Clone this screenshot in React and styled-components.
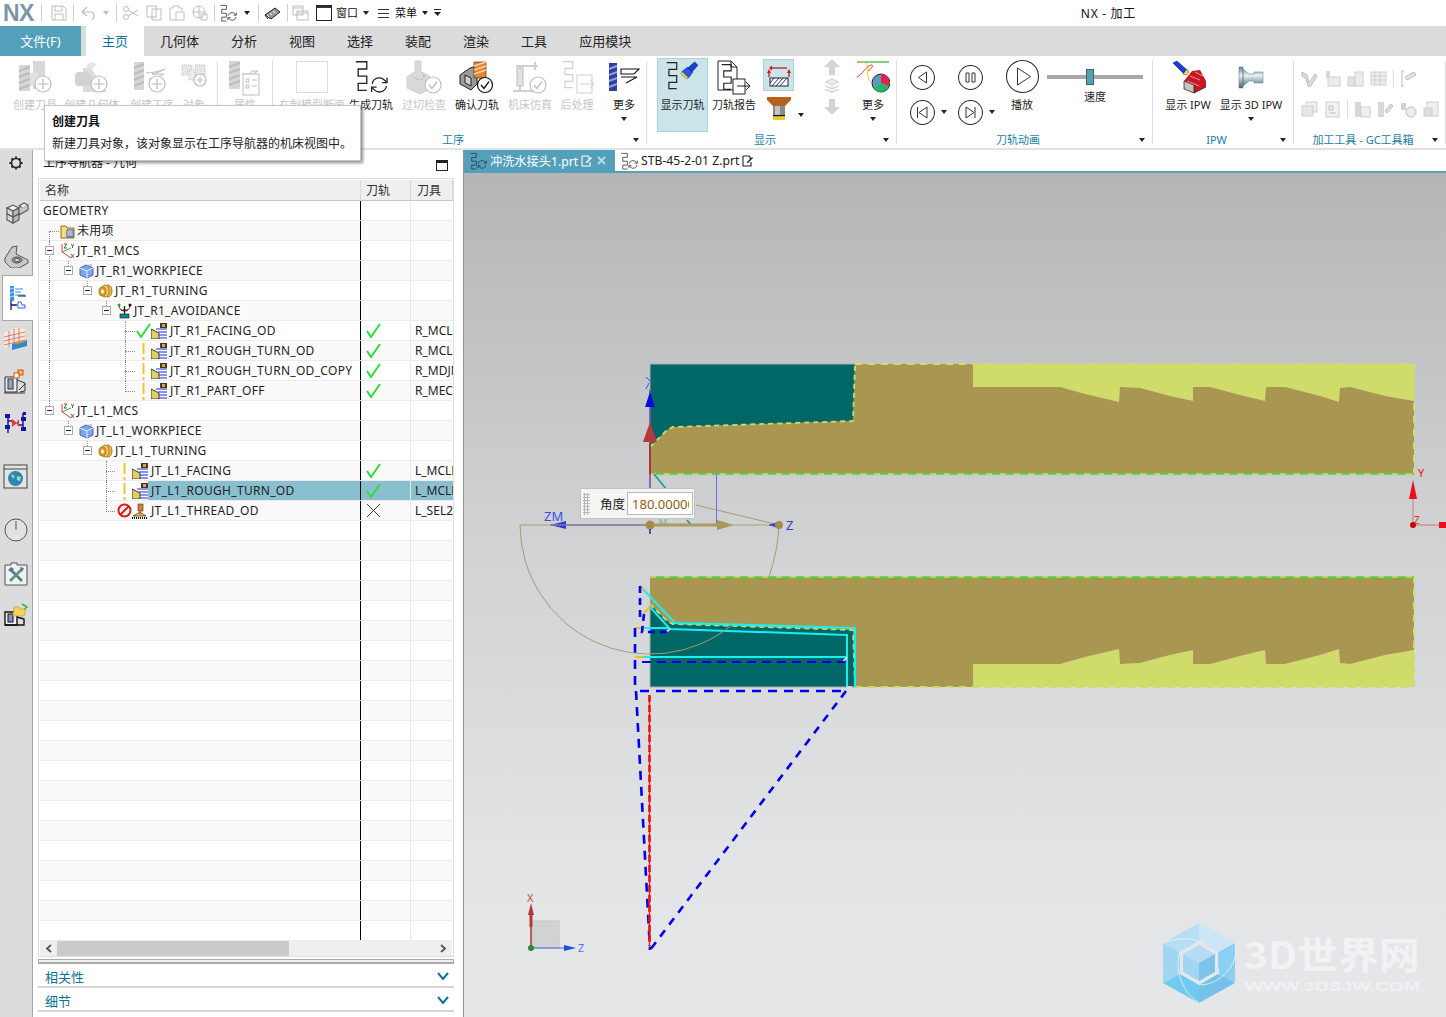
import React from 'react';
import styled, { createGlobalStyle } from 'styled-components';

const Global = createGlobalStyle`
  html, body { margin: 0; padding: 0; height: 100%; overflow: hidden; background: #fff; }
  body { font-family: "Noto Sans", "Noto Sans CJK SC", sans-serif; font-size: 12px; color: #222; }
  svg { display: block; flex: none; }
`;

const Page = styled.div`
  position: relative;
  width: 1446px;
  height: 1017px;
  display: flex;
  flex-direction: column;
  overflow: hidden;
`;

/* ---------- title bar ---------- */
const TitleBar = styled.div`
  height: 26px;
  display: flex;
  align-items: center;
  flex: none;
`;
const Logo = styled.div`
  width: 36px;
  padding-left: 3px;
  box-sizing: border-box;
  font: bold 23px/26px "Liberation Sans", sans-serif;
  color: #7d95a8;
  letter-spacing: -0.5px;
`;
const BarSep = styled.span`
  width: 1px;
  height: 18px;
  background: #cfcfcf;
  margin: 0 ${p => p.$r ?? 0}px 0 ${p => p.$l ?? 0}px;
  flex: none;
`;
const BarSlot = styled.span`
  width: ${p => p.$w}px;
  display: flex;
  justify-content: center;
  flex: none;
`;
const BarText = styled.span`
  font-size: 11px;
  line-height: 26px;
  color: #111;
  white-space: nowrap;
  flex: none;
  margin-left: ${p => p.$ml ?? 0}px;
`;
const AppTitle = styled.div`
  margin-left: auto;
  margin-right: 310px;
  font-size: 12px;
  letter-spacing: .7px;
  color: #111;
  white-space: nowrap;
`;
const Caret = styled.i`
  display: block;
  flex: none;
  width: 0;
  height: 0;
  border-left: 3.5px solid transparent;
  border-right: 3.5px solid transparent;
  border-top: 4px solid ${p => p.$c || '#222'};
  margin-left: ${p => p.$ml ?? 0}px;
`;

/* ---------- tabs ---------- */
const TabBar = styled.div`
  height: 30px;
  display: flex;
  background: #dbdbdb;
  flex: none;
`;
const FileTab = styled.div`
  width: 81px;
  margin-right: 5px;
  background: #54a0bb;
  color: #fff;
  font-size: 13px;
  line-height: 30px;
  text-align: center;
`;
const Tab = styled.div`
  padding: 0 16px;
  font-size: 13px;
  line-height: 30px;
  white-space: nowrap;
  color: ${p => (p.$active ? '#0f7394' : '#222')};
  background: ${p => (p.$active ? '#fff' : 'transparent')};
`;

/* ---------- ribbon ---------- */
const Ribbon = styled.div`
  height: 94px;
  display: flex;
  flex: none;
  border-bottom: 2px solid #e2e2e2;
  box-sizing: border-box;
`;
const Group = styled.section`
  width: ${p => p.$w}px;
  flex: none;
  display: flex;
  flex-direction: column;
  box-sizing: border-box;
  position: relative;
  &::after {
    content: "";
    position: absolute;
    right: 0;
    top: 5px;
    bottom: 4px;
    width: 1px;
    background: #dcdcdc;
  }
`;
const GroupBody = styled.div`
  height: 76px;
  display: flex;
  padding: 2px 0 0 ${p => p.$pl ?? 0}px;
  box-sizing: border-box;
  flex: none;
`;
const GroupFoot = styled.div`
  height: 16px;
  display: flex;
  align-items: center;
  padding: 0 8px 0 0;
`;
const GroupName = styled.span`
  flex: 1;
  text-align: center;
  font-size: 11px;
  line-height: 16px;
  color: #1b7ea3;
  white-space: nowrap;
`;
const Tool = styled.div`
  width: ${p => p.$w}px;
  height: 74px;
  margin-left: ${p => p.$ml ?? 0}px;
  flex: none;
  display: flex;
  flex-direction: column;
  align-items: center;
  box-sizing: border-box;
  background: ${p => (p.$on ? '#cbe4ea' : 'transparent')};
  box-shadow: ${p => (p.$on ? 'inset 0 0 0 1px #abd3dd' : 'none')};
`;
const ToolIcon = styled.div`
  height: 38px;
  padding-top: 2px;
  box-sizing: border-box;
  display: flex;
  justify-content: center;
`;
const ToolLabel = styled.div`
  font-size: 11px;
  line-height: 15px;
  white-space: nowrap;
  margin-top: 1px;
  color: ${p => (p.$off ? '#c6c6c6' : '#222')};
`;
const ToolCaret = styled(Caret)`
  margin-top: 5px;
`;
const StackCol = styled.div`
  width: ${p => p.$w}px;
  margin-left: ${p => p.$ml ?? 0}px;
  flex: none;
  display: flex;
  flex-direction: column;
  align-items: center;
  gap: ${p => p.$gap ?? 4}px;
`;
const SelectedTile = styled.div`
  width: 31px;
  height: 32px;
  margin-top: 1px;
  background: #cbe4ea;
  box-shadow: inset 0 0 0 1px #abd3dd;
  display: flex;
  align-items: center;
  justify-content: center;
`;
const CaretSlot = styled.div`
  width: ${p => p.$w}px;
  height: 62px;
  flex: none;
  display: flex;
  align-items: flex-end;
  justify-content: center;
  padding-bottom: 3px;
  box-sizing: border-box;
`;
const Transport = styled.div`
  display: grid;
  grid-template-columns: 24px 12px;
  grid-auto-rows: 24px;
  row-gap: 11px;
  column-gap: 4px;
  align-items: center;
  margin-left: ${p => p.$ml ?? 0}px;
  margin-top: 7px;
  flex: none;
  justify-items: center;
`;
const SpeedBox = styled.div`
  width: 96px;
  margin-left: 5px;
  flex: none;
  display: flex;
  flex-direction: column;
  align-items: center;
`;
const Track = styled.div`
  width: 96px;
  height: 4px;
  margin-top: 17px;
  background: #a9a9a9;
  position: relative;
`;
const Thumb = styled.div`
  position: absolute;
  left: 39px;
  top: -6px;
  width: 6px;
  height: 14px;
  background: #54a0bb;
  border: 1px solid #4d5a60;
`;
const SpeedLabel = styled.div`
  font-size: 11px;
  line-height: 14px;
  margin-top: 11px;
  color: #222;
`;
const MiniRows = styled.div`
  height: 76px;
  box-sizing: border-box;
  padding: 13px 0 0 7px;
  display: flex;
  flex-direction: column;
  gap: 13px;
  flex: none;
`;
const MiniRow = styled.div`
  display: flex;
  align-items: center;
  gap: 6px;
`;
const MiniSep = styled.span`
  width: 1px;
  height: 18px;
  background: #dcdcdc;
`;

/* ---------- tooltip ---------- */
const Tip = styled.div`
  position: absolute;
  left: 44px;
  top: 105px;
  width: 317px;
  height: 56px;
  box-sizing: border-box;
  padding: 8px 0 0 7px;
  background: #fff;
  border: 1px solid #c4c4c4;
  box-shadow: 2px 2px 3px rgba(0, 0, 0, 0.45);
  z-index: 5;
`;
const TipTitle = styled.div`
  font-size: 12px;
  line-height: 15px;
  font-weight: 700;
  color: #111;
`;
const TipBody = styled.div`
  font-size: 12px;
  line-height: 15px;
  margin-top: 7px;
  color: #222;
  white-space: nowrap;
`;

/* ---------- body ---------- */
const Body = styled.div`
  flex: 1;
  display: flex;
  min-height: 0;
`;
const Rail = styled.nav`
  width: 33px;
  flex: none;
  background: #dcdcdc;
  border-right: 1px solid #a6a6a6;
  box-sizing: border-box;
  padding-top: 1px;
  display: flex;
  flex-direction: column;
`;
const RailItem = styled.div`
  height: ${p => p.$h ?? 42}px;
  margin-top: ${p => p.$mt ?? 0}px;
  margin-left: 2px;
  margin-right: ${p => (p.$on ? -1 : 0)}px;
  flex: none;
  display: flex;
  align-items: center;
  justify-content: center;
  padding-right: 2px;
  box-sizing: border-box;
  ${p => p.$on && 'background:#fff;border:1px solid #a6a6a6;border-right:none;position:relative;'}
`;
const Panel = styled.aside`
  width: 431px;
  flex: none;
  box-sizing: border-box;
  border-right: 1px solid #919191;
  padding: 0 9px 0 5px;
  display: flex;
  flex-direction: column;
`;
const PanelHead = styled.div`
  height: 28px;
  display: flex;
  align-items: flex-end;
  justify-content: space-between;
  padding: 0 6px 7px 5px;
  box-sizing: border-box;
  flex: none;
  font-size: 12px;
  line-height: 16px;
`;
const TreeBox = styled.div`
  height: 779px;
  border: 1px solid #dedede;
  box-sizing: border-box;
  padding: 1px 1px 0 1px;
  flex: none;
`;
const HeadRow = styled.div`
  display: grid;
  grid-template-columns: 321px 50px 42px;
  height: 21px;
  background: #efefef;
  border-bottom: 1px solid #c8c8c8;
  box-sizing: border-box;
`;
const HeadCell = styled.div`
  padding-left: ${p => p.$pl ?? 5}px;
  font-size: 12px;
  line-height: 21px;
  border-right: 1px solid #d8d8d8;
  color: #333;
`;
const Row = styled.div`
  display: grid;
  grid-template-columns: 321px 50px 42px;
  height: 20px;
  box-sizing: border-box;
  border-bottom: 1px solid #ececec;
  background: ${p => (p.$alt ? '#fafafa' : '#fff')};
`;
const NameCell = styled.div`
  position: relative;
  display: flex;
  align-items: center;
  border-right: 1px solid #000;
  padding-left: ${p => p.$pl}px;
  white-space: nowrap;
`;
const GuideV = styled.i`
  position: absolute;
  left: ${p => p.$x}px;
  top: ${p => (p.$part === 'bottom' ? 10 : 0)}px;
  bottom: ${p => (p.$part === 'top' ? 10 : -1)}px;
  border-left: 1px dotted #8a8a8a;
`;
const GuideH = styled.i`
  position: absolute;
  left: ${p => p.$x}px;
  width: ${p => p.$w}px;
  top: 10px;
  border-top: 1px dotted #8a8a8a;
`;
const Toggle = styled.span`
  width: 9px;
  height: 9px;
  flex: none;
  margin-right: 6px;
  box-sizing: border-box;
  position: relative;
  z-index: 1;
  ${p => !p.$hide && `
    border: 1px solid #a9a9a9;
    background: #fff;
    &::after {
      content: "";
      position: absolute;
      left: 1px;
      right: 1px;
      top: 3px;
      height: 1px;
      background: #222;
    }
  `}
`;
const StateSlot = styled.span`
  width: 15px;
  flex: none;
  display: flex;
  justify-content: ${p => (p.$mid ? 'center' : 'flex-start')};
`;
const RowIcon = styled.span`
  width: 16px;
  flex: none;
  margin-right: ${p => p.$mr ?? 1}px;
  display: flex;
  justify-content: center;
`;
const RowName = styled.span`
  flex: ${p => (p.$sel ? 1 : 'none')};
  align-self: stretch;
  line-height: 19px;
  padding-left: 3px;
  margin-left: -3px;
  background: ${p => (p.$sel ? '#8abfcf' : 'transparent')};
  font-size: 12px;
  letter-spacing: .3px;
  color: #222;
`;
const Cell = styled.div`
  overflow: hidden;
  white-space: nowrap;
  border-right: ${p => (p.$last ? 'none' : '1px solid #e8e8e8')};
  padding-left: ${p => p.$pl ?? 4}px;
  line-height: 19px;
  font-size: 12px;
  color: #222;
  background: ${p => (p.$sel ? '#8abfcf' : 'transparent')};
  display: flex;
  align-items: center;
`;
const CellText = styled.span`
  line-height: 19px;
`;
const ScrollBar = styled.div`
  height: 15px;
  display: flex;
  align-items: center;
  justify-content: flex-start;
  background: #efefef;
`;
const ScrollArrow = styled.span`
  width: 17px;
  flex: none;
  display: flex;
  justify-content: center;
  margin-left: ${p => (p.$end ? 'auto' : 0)};
`;
const ScrollThumb = styled.span`
  width: 232px;
  height: 15px;
  background: #cacaca;
`;
const Grip = styled.div`
  height: 5px;
  margin-top: 2px;
  background: #efefef;
  border: 1px solid #aaa;
  border-bottom-width: 2px;
  box-sizing: border-box;
  flex: none;
`;
const Section = styled.div`
  height: 24px;
  flex: none;
  box-sizing: border-box;
  border-bottom: 2px solid #d4d4d4;
  display: flex;
  align-items: center;
  justify-content: space-between;
  padding: 3px 5px 0 7px;
  font-size: 13px;
  color: #0f7394;
`;

/* ---------- graphics area ---------- */
const Stage = styled.main`
  flex: 1;
  min-width: 0;
  display: flex;
  flex-direction: column;
  position: relative;
`;
const DocBar = styled.div`
  height: 23px;
  flex: none;
  display: flex;
  border-bottom: 2px solid #54a0bb;
  box-sizing: border-box;
`;
const DocTab = styled.div`
  width: ${p => p.$w}px;
  display: flex;
  align-items: center;
  gap: 3px;
  padding-left: 5px;
  box-sizing: border-box;
  background: ${p => (p.$on ? '#54a0bb' : '#fff')};
  color: ${p => (p.$on ? '#fff' : '#222')};
  font-size: 12.2px;
  white-space: nowrap;
`;
const Canvas = styled.div`
  flex: 1;
  position: relative;
  background: linear-gradient(180deg, #b4b5b7 0%, #cfd0d2 40%, #e2e3e5 80%, #e6e7e9 100%);
`;
const AngleBox = styled.div`
  position: absolute;
  left: 116px;
  top: 315px;
  width: 115px;
  height: 31px;
  box-sizing: border-box;
  display: flex;
  align-items: center;
  background: #f5f5f5;
  border: 1px solid #c2c2c2;
`;
const Dots = styled.span`
  width: 7px;
  height: 22px;
  margin-left: 2px;
  flex: none;
  background-image: radial-gradient(#b5b5b5 1px, transparent 1.2px);
  background-size: 3px 3px;
`;
const AngleLabel = styled.span`
  margin-left: 10px;
  font-size: 12.5px;
  color: #222;
  white-space: nowrap;
`;
const AngleInput = styled.input`
  width: 66px;
  height: 23px;
  margin-left: 2px;
  padding: 0 3px 0 4px;
  box-sizing: border-box;
  border: 1px solid #b9b9b9;
  background: #fff;
  color: #8d5a16;
  font: 13px "Noto Sans", sans-serif;
  outline: none;
`;

/* ---------- small drawings ---------- */
const G = '#cfcfcf';
const D = '#bdbdbd';

const Glyph = ({ w = 36, h = 36, vb, children }) => (
  <svg width={w} height={h} viewBox={vb || `0 0 ${w} ${h}`} fill="none">{children}</svg>
);

const Cutter = ({ x, y, w = 11, h = 26 }) => (
  <g>
    <rect x={x} y={y} width={w} height={h} fill="#d6d6d6" />
    <path d={`M${x} ${y + 6}l${w} -4M${x} ${y + 12}l${w} -4M${x} ${y + 18}l${w} -4M${x} ${y + 24}l${w} -4`} stroke="#bcbcbc" strokeWidth="2" />
  </g>
);
const PlusDisc = ({ cx, cy, r = 8 }) => (
  <g>
    <circle cx={cx} cy={cy} r={r} fill="#fff" stroke={D} strokeWidth="1.2" />
    <path d={`M${cx - r + 2.5} ${cy}H${cx + r - 2.5}M${cx} ${cy - r + 2.5}V${cy + r - 2.5}`} stroke={D} strokeWidth="1.2" />
  </g>
);
const CheckDisc = ({ cx, cy, r = 8, c = D }) => (
  <g>
    <circle cx={cx} cy={cy} r={r} fill="#fff" stroke={c} strokeWidth="1.2" />
    <path d={`M${cx - 4} ${cy}l3 3.5 5 -7`} stroke={c} strokeWidth="1.3" />
  </g>
);
const SPath = ({ x = 0, y = 0, c = '#222', s = 1 }) => (
  <path transform={`translate(${x} ${y}) scale(${s})`} d="M.7.7h10v6.6H2.9v6.4h7.8v6.6H2.9v6.4h7.8" stroke={c} strokeWidth="1.2" />
);
const Refresh = ({ x = 0, y = 0, c = '#222', s = 1 }) => (
  <g transform={`translate(${x} ${y}) scale(${s})`} stroke={c} strokeWidth="1.2">
    <path d="M2 8a6.5 6.5 0 0 1 11-3.5l2 2" />
    <path d="M15.5 2.5v4.5H11" />
    <path d="M15 10a6.5 6.5 0 0 1-11 3.5l-2-2" />
    <path d="M1.500 15.500v-4.500H6" />
  </g>
);
const Flashlight = ({ x, y, s = 1 }) => (
  <g transform={`translate(${x} ${y}) scale(${s})`}>
    <path d="M7 7L14 1l3 3-6 7z" fill="#1b3fd6" stroke="#0b1f80" strokeWidth=".6" />
    <path d="M2 10l5-4 5 5-4 5z" fill="#2c55e8" stroke="#0b1f80" strokeWidth=".6" />
    <path d="M2 10l6 6-2 1-5-5z" fill="#f4e04a" stroke="#444" strokeWidth=".5" />
  </g>
);

const CreateToolIcon = () => (
  <Glyph><Cutter x={2} y={5} /><rect x={16} y={1} width={12} height={28} fill="#d8d8d8" /><rect x={13} y={13} width={8} height={13} fill="#e2e2e2" /><PlusDisc cx={26} cy={24} /></Glyph>
);
const CreateGeomIcon = () => (
  <Glyph w={40}><path d="M11 8h8l16 24H11z" fill="#dcdcdc" /><path d="M13 6l7-4 5 2-5 6z" fill="#e6e6e6" /><rect x={3} y={12} width={16} height={14} rx={4} fill="#d2d2d2" /><PlusDisc cx={27} cy={24} /></Glyph>
);
const CreateOpIcon = () => (
  <Glyph w={40}><Cutter x={2} y={2} w={10} h={28} /><path d="M14 13c8 0 16-3 19-4-5 3-9 4-13 5h12c-5 3-10 4-15 5" stroke={D} /><PlusDisc cx={25} cy={24} /></Glyph>
);
const SmallCreateIcon = () => (
  <Glyph w={26}><rect x={1} y={5} width={10} height={10} fill="#e6e6e6" stroke={D} strokeDasharray="1 1" /><rect x={8} y={10} width={10} height={10} fill="#ececec" stroke={D} strokeDasharray="1 1" /><rect x={14} y={5} width={10} height={10} fill="#e6e6e6" stroke={D} strokeDasharray="1 1" /><PlusDisc cx={19} cy={20} r={6} /></Glyph>
);
const PropsIcon = () => (
  <Glyph w={34}><Cutter x={1} y={1} w={11} h={28} /><path d="M14 14h8l2-3h6l-8 5" stroke={D} /><rect x={15} y={14} width={16} height={21} fill="#fff" stroke={D} /><path d="M18 19h3v3h-3zM24 20h5M18 25h3v3h-3zM24 26h5" stroke={D} /></Glyph>
);
const EmptyIcon = () => (
  <Glyph w={34}><rect x={1.500} y={1.500} width={31} height={31} stroke="#dcdcdc" fill="#fff" /></Glyph>
);
const GenerateIcon = () => (
  <Glyph w={36}><SPath x={2} y={1} s={1.1} /><Refresh x={17} y={15} s={1.1} /></Glyph>
);
const BlockCheckIcon = () => (
  <Glyph><path d="M1 17l6-4 2-1V1h6v11l3 1 8 5v10l-12 6L1 28z" fill="#d9d9d9" stroke="#cfcfcf" /><path d="M6 16l8 4 6-4-3-2v6h-6z" fill="#bdbdbd" /><CheckDisc cx={27} cy={25} /></Glyph>
);
const ConfirmIcon = () => (
  <Glyph>
    <path d="M1 15l10-7 7-2v18l-6 6-11-6z" fill="#9b9b9b" stroke="#222" />
    <path d="M6 15l6 3v8l-6-3z" fill="#cfcfcf" stroke="#222" />
    <path d="M15 2h12v16H15z" fill="#e9852c" stroke="#222" strokeWidth=".6" />
    <path d="M15 6l12-4M15 10l12-4M15 14l12-4" stroke="#f6d5a8" strokeWidth="1.4" />
    <CheckDisc cx={26} cy={25} r={7.500} c="#111" />
  </Glyph>
);
const SimIcon = () => (
  <Glyph><path d="M1 31h22M8 31V5M4 6h22M23 2v8" stroke={G} strokeWidth="2" /><rect x={5} y={8} width={6} height={18} fill="#e2e2e2" stroke={D} /><CheckDisc cx={26} cy={25} /></Glyph>
);
const PostIcon = () => (
  <Glyph w={34}><SPath x={2} y={1} c={G} /><rect x={17} y={15} width={15} height={18} stroke={G} fill="#fff" /><path d="M20 24h14M30 20l4 4-4 4" stroke={G} /></Glyph>
);
const MoreToolIcon = () => (
  <Glyph w={32}><rect x={1} y={3} width={8} height={28} fill="#2f3f9f" /><path d="M1 9l8-3M1 15l8-3M1 21l8-3M1 27l8-3" stroke="#8aa0ea" strokeWidth="2" /><path d="M13 9h18l-5 5H13zM13 17h16l-11 6" stroke="#111" strokeWidth="1.1" /></Glyph>
);
const ShowPathIcon = () => (
  <Glyph w={34} vb="0 0 34 36"><SPath x={0} y={2} /><Flashlight x={14} y={1} s={1.05} /></Glyph>
);
const ReportIcon = () => (
  <Glyph w={34}><path d="M1 1h13l6 6v23H1z" fill="#fff" stroke="#222" /><path d="M14 1v6h6" stroke="#222" /><SPath x={4} y={4} s={.95} /><rect x={16} y={19} width={12} height={15} fill="#fff" stroke="#222" /><path d="M20 26h12M29 22l4 4-4 4" stroke="#222" /></Glyph>
);
const HatchIcon = () => (
  <Glyph w={24} h={24}>
    <path d="M5 5h15" stroke="#c81818" strokeWidth="1.3" /><path d="M5 2.500L2 5l3 2.500z" fill="#c81818" />
    <path d="M2 9v5M22 9v5" stroke="#c81818" strokeWidth="1.3" /><path d="M0 10l2-4 2 4zM20 10l2-4 2 4z" fill="#c81818" />
    <rect x={3} y={15} width={18} height={8} fill="#fff" stroke="#222" />
    <path d="M5 23l7-8M9 23l7-8M13 23l7-8M3 20l4-5" stroke="#2a2a7a" />
  </Glyph>
);
const BitIcon = () => (
  <Glyph w={26} h={26}>
    <path d="M1 1h24v3l-6 6H7L1 4z" fill="#b5601e" />
    <rect x={7} y={10} width={12} height={9} fill="#8a8a8a" />
    <rect x={9} y={10} width={5} height={9} fill="#c2c2c2" />
    <rect x={7} y={19} width={12} height={1.500} fill="#111" />
    <rect x={7} y={20.500} width={12} height={3.500} fill="#f2cb1f" />
  </Glyph>
);
const ArrowUpIcon = ({ flip }) => (
  <Glyph w={18} h={18}><path transform={flip ? 'rotate(180 9 9)' : undefined} d="M9 1l8 8h-5v8H6V9H1z" fill="#d4d4d4" /></Glyph>
);
const LayersIcon = () => (
  <Glyph w={18} h={18}><path d="M9 1l7 3-7 3-7-3zM2 8l7 3 7-3M2 11.500l7 3 7-3" stroke="#cfcfcf" fill="#ececec" /></Glyph>
);
const ColorsIcon = () => (
  <Glyph w={34}>
    <path d="M1 2h32" stroke="#0a9a0a" strokeWidth="1" />
    <path d="M1 17c6-3 8-10 14-12 3-1 1 4-3 6" stroke="#e33" />
    <path d="M4 1c5 1 9 3 8 8-1 6 0 10 3 13" stroke="#eec233" />
    <circle cx={25} cy={23} r={9} fill="#54a0bb" stroke="#222" />
    <path d="M25 23V14a9 9 0 0 1 8 12z" fill="#e8204a" />
    <path d="M25 23l8 3a9 9 0 0 1-15 3z" fill="#29b36a" />
  </Glyph>
);
const RoundIcon = ({ r = 12, children }) => (
  <Glyph w={r * 2 + 1} h={r * 2 + 1}>
    <circle cx={r + .5} cy={r + .5} r={r} fill="#fff" stroke="#333" strokeWidth="1.1" />
    {children}
  </Glyph>
);
const IpwIcon = () => (
  <Glyph w={36}>
    <path d="M3 3l4-2 10 9-3 4z" fill="#1a3fd6" stroke="#0b1f80" strokeWidth=".6" />
    <path d="M13 14l4-5 2 3-3 3z" fill="#f3e04a" stroke="#333" strokeWidth=".5" />
    <path d="M14 21l8-10 8-1 6 11v6l-12 6v-8z" fill="#c51820" />
    <path d="M14 21v8l10 4v-8z" fill="#c4c4c4" stroke="#111" strokeWidth=".7" />
    <path d="M20 16l10 4M17 21l12 5M25 12l8 4" stroke="#f1b8b8" strokeWidth=".8" />
    <path d="M24 33l12-6" stroke="#111" strokeWidth=".7" />
  </Glyph>
);
const Ipw3dIcon = () => (
  <Glyph w={30}>
    <defs>
      <linearGradient id="steel" x1="0" y1="0" x2="0" y2="1">
        <stop offset="0" stopColor="#5f8292" /><stop offset=".4" stopColor="#e8f1f4" /><stop offset="1" stopColor="#3f6678" />
      </linearGradient>
    </defs>
    <path d="M3 7h4v21H3zM7 9l6 5h5v-2h9v11h-9v-2h-5l-6 5z" fill="url(#steel)" stroke="#58727e" strokeWidth=".5" />
  </Glyph>
);
const MiniIcon = ({ k }) => {
  const shapes = {
    a: <path d="M1 2l5 3 2 8 6-9 2 2-8 13L5 9 1 6z" fill="#dcdcdc" stroke={D} />,
    b: <g><rect x={2} y={1} width={4} height={7} fill="#d8d8d8" /><rect x={4} y={7} width={12} height={9} fill="#ececec" stroke={G} /></g>,
    c: <g><rect x={1} y={7} width={7} height={9} fill="#e2e2e2" stroke={G} /><rect x={8} y={2} width={8} height={14} fill="#ececec" stroke={G} /></g>,
    d: <g><rect x={1} y={2} width={15} height={13} fill="#ededed" stroke={G} /><path d="M1 6h15M1 10h15M5 2v13M10 2v13" stroke={G} /></g>,
    e: <path d="M2 1v15M1 1h3M1 16h3M5 7l9-5 2 3-9 5z" stroke={D} fill="#e4e4e4" />,
    f: <g><rect x={5} y={1} width={11} height={10} fill="#f0f0f0" stroke={G} /><rect x={1} y={5} width={11} height={10} fill="#e6e6e6" stroke={G} /></g>,
    g: <g><rect x={2} y={1} width={13} height={15} fill="#f2f2f2" stroke={G} /><path d="M5 5h4v4H5zM5 12h7" stroke={D} /></g>,
    h: <g><rect x={1} y={1} width={6} height={15} fill="#d8d8d8" /><rect x={7} y={6} width={9} height={10} fill="#f0f0f0" stroke={G} /></g>,
    i: <g><rect x={1} y={1} width={6} height={15} fill="#d8d8d8" /><path d="M8 10l6-7 2 2-6 7z" fill="#e0e0e0" stroke={D} /></g>,
    j: <g><rect x={1} y={2} width={5} height={7} fill="#d2d2d2" /><circle cx={11} cy={11} r={5} fill="#ececec" stroke={D} /></g>,
    k: <g><rect x={4} y={1} width={11} height={14} fill="#efefef" stroke={G} /><rect x={1} y={7} width={8} height={8} fill="#dcdcdc" stroke={G} /></g>,
  };
  return <Glyph w={17} h={17}>{shapes[k]}</Glyph>;
};

const RailIcon = ({ k }) => {
  const s = {
    gear: <g><circle cx={13} cy={13} r={4.500} stroke="#222" strokeWidth="1.600" /><path d="M13 6.500v2M13 17.500v2M6.500 13h2M17.500 13h2M8.500 8.500l1.500 1.500M16 16l1.500 1.500M8.500 17.500l1.500-1.500M16 10l1.500-1.500" stroke="#222" strokeWidth="1.800" /></g>,
    block: <g stroke="#555" strokeWidth="1.100">
      <path d="M4 9l6-3 6 3-6 3z" fill="#f0f0f0" /><path d="M4 9v6l6 3v-6z" fill="#d8d8d8" /><path d="M16 9v6l-6 3v-6z" fill="#b8b8b8" />
      <path d="M16 7l5-3 4 2-5 3z" fill="#f0f0f0" /><path d="M25 6v5l-9 5V9.500" fill="#c4c4c4" />
      <path d="M4 15v6l6 3v-6z" fill="#d8d8d8" /><path d="M16 15v6l-6 3v-6z" fill="#b8b8b8" />
    </g>,
    bracket: <g stroke="#555" strokeWidth="1"><path d="M2 16l7-11 5-1-1 8 12 6v3l-9 5H8L2 20z" fill="#c9c9c9" /><ellipse cx={14} cy={18} rx={5} ry={3} fill="#8f8f8f" /><ellipse cx={14} cy={18} rx={2.500} ry={1.500} fill="#eee" /></g>,
    nav: <g><rect x={6} y={1} width={4} height={15} fill="#3a8fe0" /><path d="M6 4l4-1M6 8l4-1M6 12l4-1" stroke="#bcdcf7" /><path d="M11 4h8M11 7h6M11 10h10" stroke="#3a8fe0" /><path d="M14 11h8" stroke="#111" /><path d="M7 16v9M7 20h6" stroke="#12128a" strokeWidth="1.300" /><path d="M14 17h3l1 3h3v3h-7z" stroke="#2a62d0" fill="#fff" /></g>,
    table: <g><path d="M1 7l14-6 7 2v14L1 22z" fill="#f7edc4" /><path d="M1 11l21-5M1 15l21-5M1 19l21-5M6 5v16M11 3v16M16 1.500v16" stroke="#c45ca5" strokeWidth=".8" /><path d="M9 18l15-4v6L9 24z" fill="#2f88d0" /><path d="M11 17l9-2.500 3 1-9 2.500z" fill="#f2931e" /></g>,
    mach: <g><path d="M2 9h12v15H2z" fill="#e9e9e9" stroke="#333" /><rect x={5} y={11} width={5} height={10} fill="#8fa7c0" stroke="#333" /><path d="M14 12l8 3v8l-5 1M16 22l6-6M1 25h21" stroke="#333" /><rect x={15} y={2} width={5} height={5} fill="#f1c43a" stroke="#d24a1a" /><rect x={11} y={5} width={5} height={5} fill="#fff" stroke="#d24a1a" /></g>,
    nodes: <g><path d="M5 4v18M20 2v18M5 10h5M15 14h5" stroke="#1414a8" strokeWidth="1.500" /><path d="M2 3h5v4H2zM2 14h5v4H2zM18 6h5v4h-5zM18 16h5v4h-5zM20 1h3v3h-3z" fill="#1414a8" /><path d="M9 8l5 4-5 4zM16 8l-3 4 3 4z" fill="#e33" /></g>,
    web: <g><rect x={1} y={1} width={23} height={23} fill="#e4e4e4" stroke="#444" /><path d="M1 5h23" stroke="#444" /><circle cx={12.500} cy={14.500} r={7.500} fill="#2d86ae" /><path d="M8 10l4 2-2 3zM14 12l4 1-1 4-3-1z" fill="#9fd9c2" /></g>,
    clock: <g><circle cx={13} cy={13} r={11} fill="#e2e2e2" stroke="#555" /><path d="M13 4v9" stroke="#555" /></g>,
    tools: <g><path d="M2 4h6V2h6v2h10v20H2z" fill="#f1f1f1" stroke="#555" /><path d="M7 8l12 12" stroke="#4f7f85" strokeWidth="2.600" /><path d="M19 8L7 20" stroke="#5f8f95" strokeWidth="2.600" /><path d="M5 9l3-3 3 2-3 3zM17 6l4 1-2 4z" fill="#4f7f85" /></g>,
    open: <g><path d="M2 9h12v13H2z" fill="#f2f2f2" stroke="#111" strokeWidth="1.400" /><rect x={5} y={11} width={5} height={8} fill="#7d97c0" stroke="#111" /><path d="M14 14l7 2v6H2" stroke="#111" strokeWidth="1.400" /><path d="M11 4h5l1 2h6l-2 7H10z" fill="#f5d35a" stroke="#b8902a" strokeWidth=".600" /><path d="M19 1l5 3-3 2" stroke="#3ab53a" strokeWidth="1.500" /></g>,
  };
  return <Glyph w={26} h={26}>{s[k]}</Glyph>;
};

const TinyDoc = ({ c = '#222' }) => (
  <Glyph w={12} h={13}><path d="M1 2h6l1 1v2M1 2v10h8V8" stroke={c} strokeWidth="1.100" /><path d="M5 8l5-5 1 1-5 5H5z" fill={c} /></Glyph>
);

/* tree icons */
const TreeIcon = ({ k }) => {
  const s = {
    folder: <g><path d="M1 3h5l1 2h7v10H1z" fill="#f5dd86" stroke="#8a6d1a" /><path d="M7 7h6v7H7z" fill="#fff" stroke="#2a4fa0" /><path d="M8 9h4M8 11h4M8 13h4" stroke="#2a4fa0" strokeWidth=".800" /></g>,
    mcs: <g><path d="M2 1v8l9 6" stroke="#e33" strokeWidth="1" /><path d="M2 9l9-4" stroke="#2db52d" strokeWidth="1" /><path d="M4 1h3l-3 4h3M11 1l1.500 2L14 1M12.500 3v2M11 11l3 4M14 11l-3 4" stroke="#333" strokeWidth=".800" /></g>,
    wp: <g><path d="M1 5l6-3 7 3v7l-6 3-7-3z" fill="#7fa5e8" stroke="#4466b8" /><path d="M1 5l7 3 6-3M8 8v7" stroke="#e6eefc" /><path d="M7 2l6-1v3" fill="#a9c4f0" /></g>,
    turn: <g><ellipse cx={10} cy={8} rx={4} ry={6} fill="#eab94a" stroke="#a8781a" /><ellipse cx={7} cy={8} rx={4} ry={6} fill="#f1cf6e" stroke="#a8781a" /><ellipse cx={4.500} cy={8.500} rx={3.500} ry={4.500} fill="#d8a030" stroke="#a8781a" /><ellipse cx={4.500} cy={8.500} rx={1.500} ry={2} fill="#fff2c4" /></g>,
    avoid: <g><path d="M2 1c0 6 3 7 5 7M13 1c0 6-3 7-5 7" stroke="#a82020" /><circle cx={2} cy={2} r={1.500} fill="#28a028" /><circle cx={13} cy={2} r={1.500} fill="#111" /><path d="M4 7h7M7.500 3v8" stroke="#111" strokeWidth="1.200" /><rect x={3} y={11} width={9} height={4} fill="#0f8c8c" stroke="#111" strokeWidth=".600" /></g>,
    op: <g><path d="M0 6l8 4v6H0z" fill="#dfcf64" stroke="#111" strokeWidth=".800" /><path d="M5 6h11M7 9h9M8 12h8M8 15h8" stroke="#1a33d0" strokeWidth="1.200" /><rect x={9} y={0} width={7} height={5} fill="#3a3a3a" /><rect x={11} y={1} width={3} height={3} fill="#e8a020" /></g>,
    thread: <g><path d="M0 15h15" stroke="#111" strokeWidth="2" strokeDasharray="1 1" /><path d="M1 13l7-4 6 4z" fill="#e8c83a" stroke="#111" strokeWidth=".600" /><rect x={6} y={1} width={5} height={7} fill="#d8801e" stroke="#333" strokeWidth=".600" /><path d="M8 8v4" stroke="#e33" /></g>,
  };
  return <Glyph w={16} h={16}>{s[k]}</Glyph>;
};
const CheckMark = ({ size = 15 }) => (
  <Glyph w={size} h={size} vb="0 0 15 15"><path d="M1 8l4 6L14 1" stroke="#2edc3a" strokeWidth="2" /></Glyph>
);
const CrossMark = () => (
  <Glyph w={15} h={15}><path d="M1 1l13 13M14 1L1 14" stroke="#444" strokeWidth="1" /></Glyph>
);
const YellowBar = () => (
  <Glyph w={12} h={18}><path d="M5.500 1v11M5.500 15v3" stroke="#f4c430" strokeWidth="2" /></Glyph>
);
const NoEntry = () => (
  <Glyph w={15} h={15}><circle cx={7.500} cy={7.500} r={6} stroke="#e01818" strokeWidth="2" /><path d="M3.500 11.500l8-8" stroke="#e01818" strokeWidth="2" /></Glyph>
);
const Chevron = () => (
  <Glyph w={12} h={9}><path d="M1 1l5 6 5-6" stroke="#0f7394" strokeWidth="2" /></Glyph>
);
const ScrollGlyph = ({ right }) => (
  <Glyph w={7} h={9}><path d={right ? 'M1 1l4 3.500-4 3.500' : 'M6 1L2 4.500 6 8'} stroke="#555" strokeWidth="1.800" /></Glyph>
);

/* ---------- the model on the canvas, drawn in page coordinates ---------- */
const saw = '973,387 1060,387 1085,394 1119,402 1120,387 1140,388 1170,396 1193,401 1193,387 1210,387 1240,395 1265,401 1266,387 1285,387 1320,396 1339,402 1340,388 1350,387 1385,396 1414,401';
const teal = '650,364 855,364 853,421 673,427 667,430 650,447';

const HalfPart = ({ flip }) => (
  <g transform={flip ? 'matrix(1 0 0 -1 0 1051)' : undefined}>
    <polygon points={`973,364 1414,364 ${saw.split(' ').reverse().join(' ')}`} fill="#cfdc6a" />
    <polygon points={`650,474 650,447 667,430 673,427 853,421 855,364 973,364 ${saw} 1414,474`} fill="#a99650" />
    <polygon points={teal} fill="#006666" />
    <path d="M855 364H1414V474" stroke="#cfdc6a" strokeWidth="2" strokeDasharray="7 6" />
    <path d="M650 474H1414" stroke="#35e03a" strokeWidth="1.500" />
    <path d="M650 474H1414" stroke="#cfdc6a" strokeWidth="1.500" strokeDasharray="6 8" />
    <path d="M650 447L667 430 673 427 853 421 855 364" stroke="#cfdc6a" strokeWidth="1.800" strokeDasharray="5 4" />
    <path d="M650 447V364H855" stroke="#a9b0b0" strokeWidth="1" />
  </g>
);

const Triad = () => (
  <g>
    <path d="M650 474V390" stroke="#7b3fb8" strokeWidth="1.500" />
    <polygon points="650,392 645,407 655,407" fill="#0a0ae0" />
    <path d="M650 474V443" stroke="#a63a3a" strokeWidth="2" />
    <polygon points="650,422 643,442 657,442" fill="#b33a3a" />
    <path d="M650 488V474" stroke="#7b3fb8" strokeWidth="1.500" />
    <path d="M646 389l3-6M646 377l6 6" stroke="#4444ff" />
    <path d="M654 474l13 16M687 520l5 6" stroke="#0f9a9a" strokeWidth="1.500" />
    <path d="M716.500 474V525" stroke="#6b6bff" />
    <path d="M550 525H650" stroke="#4a55f0" strokeWidth="1.500" />
    <polygon points="550,525 566,521 566,529" fill="#2a3ad8" />
    <path d="M650 525H720" stroke="#a99650" strokeWidth="3" />
    <polygon points="734,525 717,520 717,530" fill="#a99650" />
    <path d="M520 525H779" stroke="#b0a070" strokeWidth="1" />
    <path d="M696 505L779 525" stroke="#a89a70" />
    <path d="M769 577Q778 550 779 525" stroke="#a89a70" />
    <path d="M520 525A130 130 0 0 0 732 625" stroke="#a89a70" />
    <polygon points="768,525 778,522 778,528" fill="#3a45e0" />
    <circle cx={650} cy={525} r={4.500} fill="#a28f45" />
    <circle cx={779} cy={525} r={4} fill="#a28f45" />
    <path d="M650 529V534" stroke="#2222e0" strokeWidth="1.500" />
    <text x={544} y={521} fontSize="13" fill="#3a4af0" fontFamily="Noto Sans">ZM</text>
    <text x={786} y={530} fontSize="13" fill="#2a3ad8" fontFamily="Noto Sans">Z</text>
    <text x={659} y={526} fontSize="9" fill="#7fae8a" fontFamily="Noto Sans">M</text>
  </g>
);

const Toolpath = () => (
  <g>
    <path d="M640 586L675 623 855 628V687" stroke="#19eef0" strokeWidth="2.200" />
    <path d="M650 607L670 629 847 635V687" stroke="#19eef0" strokeWidth="2" />
    <path d="M643 628H670M643 657H847" stroke="#19eef0" strokeWidth="2" />
    <path d="M640 586L644 590M644 613L650 607M635 628H643M635 657H643" stroke="#f4bb18" strokeWidth="2" />
    <path d="M670 629l-4 3M847 657l-4 5M847 687l5 0" stroke="#f4c8d8" strokeWidth="2" />
    <path d="M640 586V618M644 614L642 632H668" stroke="#0000f0" strokeWidth="2.600" strokeDasharray="7 5" />
    <path d="M635 628V690M636 691L650 950" stroke="#0000f0" strokeWidth="2.600" strokeDasharray="9 7" />
    <path d="M642 662H845" stroke="#0000f0" strokeWidth="2" strokeDasharray="9 6" />
    <path d="M640 691H845" stroke="#0000f0" strokeWidth="2.600" strokeDasharray="9 7" />
    <path d="M846 691L650 950" stroke="#0000f0" strokeWidth="2.600" strokeDasharray="8 7" />
    <path d="M649.500 695V946" stroke="#f01010" strokeWidth="1.200" />
    <path d="M649.500 695V946" stroke="#f01010" strokeWidth="2.600" strokeDasharray="7 3" />
  </g>
);

const SideTriads = () => (
  <g>
    <path d="M1413 525V497" stroke="#c77" />
    <polygon points="1413,480 1409,499 1417,499" fill="#ee0d1d" />
    <path d="M1413 525H1440" stroke="#c77" />
    <polygon points="1446,522 1439,522 1439,528 1446,528" fill="#ee0d1d" />
    <circle cx={1413} cy={525} r={3} fill="#c00" />
    <text x={1418} y={477} fontSize="11" fill="#ee1111" fontFamily="Noto Sans">Y</text>
    <text x={1414} y={524} fontSize="10" fill="#dd3333" fontFamily="Noto Sans">Z</text>

    <rect x={532} y={921} width={27} height={27} fill="#d2d2d2" stroke="#c8c8c8" />
    <path d="M531 948V920" stroke="#a63a3a" strokeWidth="1.500" />
    <polygon points="531,903 528,915 534,915" fill="#b33a3a" />
    <rect x={529.500} y={913} width={3} height={14} fill="#b33a3a" />
    <path d="M531 948H565" stroke="#4466d8" strokeWidth="1.200" />
    <polygon points="576,948 564,945 564,951" fill="#1551e0" />
    <circle cx={531} cy={948} r={3} fill="#2f8a3a" />
    <text x={527} y={902} fontSize="11" fill="#cc4444" fontFamily="Noto Sans">X</text>
    <text x={578} y={952} fontSize="11" fill="#5577ee" fontFamily="Noto Sans">Z</text>
  </g>
);

const Watermark = () => (
  <g>
    <polygon points="1199,963 1163,943 1199,923" fill="#b6def5" />
    <polygon points="1199,963 1199,923 1235,943" fill="#cde6f5" />
    <polygon points="1199,963 1235,943 1235,983" fill="#8ad0f1" />
    <polygon points="1199,963 1235,983 1199,1003" fill="#74c2ea" />
    <polygon points="1199,963 1199,1003 1163,983" fill="#72c9f2" />
    <polygon points="1199,963 1163,983 1163,943" fill="#a1d6f2" />
    <path d="M1163 943C1185 935 1215 935 1219 975M1235 943C1240 965 1220 985 1199 985M1199 1003C1180 990 1175 970 1180 950" stroke="#eef4f8" strokeWidth=".800" />
    <polygon points="1199,941 1218,952 1218,974 1199,985 1180,974 1180,952" fill="#e6e7e9" />
    <polygon points="1199,945 1215,954 1199,963 1183,954" fill="#b5dcf4" />
    <polygon points="1183,954 1199,963 1199,981 1183,972" fill="#a4d4f3" />
    <polygon points="1215,954 1199,963 1199,981 1215,972" fill="#7ac3ea" />
    <text x={1244} y={969} fontSize="38" fontWeight="700" fill="#f1f2f4" fontFamily='"Noto Sans CJK SC", sans-serif' textLength="176" lengthAdjust="spacingAndGlyphs">3D世界网</text>
    <text x={1245} y={991} fontSize="12" fontWeight="700" fill="#f0f1f3" fontFamily='"Liberation Sans", sans-serif' textLength="175" lengthAdjust="spacingAndGlyphs">WWW.3DSJW.COM</text>
  </g>
);

/* ---------- tree data ---------- */
const rows = [
  { name: 'GEOMETRY', root: true },
  { name: '未用项', level: 0, icon: 'folder', leaf: true, h: [9, 10], guides: [[9, 'bottom']] },
  { name: 'JT_R1_MCS', level: 0, icon: 'mcs', guides: [[9]] },
  { name: 'JT_R1_WORKPIECE', level: 1, icon: 'wp', guides: [[9], [28, 'top']] },
  { name: 'JT_R1_TURNING', level: 2, icon: 'turn', guides: [[9], [47, 'top']] },
  { name: 'JT_R1_AVOIDANCE', level: 3, icon: 'avoid', guides: [[9], [66, 'top']] },
  { name: 'JT_R1_FACING_OD', level: 4, icon: 'op', state: 'check', leaf: true, path: 'ok', tool: 'R_MCLNR', h: [85, 10], guides: [[9], [85]] },
  { name: 'JT_R1_ROUGH_TURN_OD', level: 4, icon: 'op', state: 'warn', leaf: true, path: 'ok', tool: 'R_MCLNR', h: [85, 10], guides: [[9], [85]] },
  { name: 'JT_R1_ROUGH_TURN_OD_COPY', level: 4, icon: 'op', state: 'warn', leaf: true, path: 'ok', tool: 'R_MDJNR', h: [85, 10], guides: [[9], [85]] },
  { name: 'JT_R1_PART_OFF', level: 4, icon: 'op', state: 'warn', leaf: true, path: 'ok', tool: 'R_MECHR', h: [85, 10], guides: [[9], [85, 'top']] },
  { name: 'JT_L1_MCS', level: 0, icon: 'mcs', guides: [[9, 'top']] },
  { name: 'JT_L1_WORKPIECE', level: 1, icon: 'wp', guides: [[28, 'top']] },
  { name: 'JT_L1_TURNING', level: 2, icon: 'turn', guides: [[47, 'top']] },
  { name: 'JT_L1_FACING', level: 3, icon: 'op', state: 'warn', leaf: true, path: 'ok', tool: 'L_MCLNR', h: [66, 9], guides: [[66]] },
  { name: 'JT_L1_ROUGH_TURN_OD', level: 3, icon: 'op', state: 'warn', leaf: true, path: 'ok', tool: 'L_MCLNR', h: [66, 9], guides: [[66]], sel: true },
  { name: 'JT_L1_THREAD_OD', level: 3, icon: 'thread', state: 'stop', leaf: true, path: 'no', tool: 'L_SEL2', h: [66, 9], guides: [[66, 'top']] },
];
const blanks = Array.from({ length: 21 }, (_, i) => i);

const stateMark = {
  check: <StateSlot><CheckMark /></StateSlot>,
  warn: <StateSlot $mid><YellowBar /></StateSlot>,
  stop: <StateSlot><NoEntry /></StateSlot>,
};

function TreeRow({ r, alt }) {
  return (
    <Row $alt={alt}>
      <NameCell $pl={r.root ? 3 : 5 + r.level * 19}>
        {r.guides && r.guides.map(([x, part]) => <GuideV key={x} $x={x} $part={part} />)}
        {r.h && <GuideH $x={r.h[0]} $w={r.h[1]} />}
        {!r.root && <Toggle $hide={r.leaf} />}
        {r.state && stateMark[r.state]}
        {r.icon && <RowIcon $mr={r.state ? 3 : 1}><TreeIcon k={r.icon} /></RowIcon>}
        <RowName $sel={r.sel}>{r.name}</RowName>
      </NameCell>
      <Cell $sel={r.sel} $pl={5}>
        {r.path === 'ok' && <CheckMark />}
        {r.path === 'no' && <CrossMark />}
      </Cell>
      <Cell $last $sel={r.sel}><CellText>{r.tool}</CellText></Cell>
    </Row>
  );
}

export default function App() {
  return (
    <Page>
      <Global />
      <TitleBar>
        <Logo>NX</Logo>
        <BarSep $l={5} $r={5} />
        <BarSlot $w={24}>
          <Glyph w={16} h={16}><path d="M1 1h11l3 3v11H1z" stroke={D} /><path d="M4 1v5h7V1M4 15v-6h8v6" stroke={D} /></Glyph>
        </BarSlot>
        <BarSep $l={2} $r={2} />
        <BarSlot $w={26}>
          <Glyph w={18} h={14}><path d="M2 6h10a5 5 0 0 1 0 8M2 6l5-5M2 6l5 4" stroke={D} strokeWidth="1.200" /></Glyph>
        </BarSlot>
        <Caret $c="#bbb" $ml={1} />
        <BarSep $l={7} $r={2} />
        <BarSlot $w={23}>
          <Glyph w={16} h={16}><circle cx={3} cy={4} r={2.500} stroke={D} /><circle cx={3} cy={12} r={2.500} stroke={D} /><path d="M5 5l10 6M5 11l10-6" stroke={D} /></Glyph>
        </BarSlot>
        <BarSlot $w={23}>
          <Glyph w={16} h={16}><path d="M1 1h9v11H1zM6 4h9v11H6z" stroke={D} fill="#fff" /></Glyph>
        </BarSlot>
        <BarSlot $w={23}>
          <Glyph w={16} h={16}><path d="M1 3h3V1h6v2h3v3M1 3v12h14V7H7v8" stroke={D} /></Glyph>
        </BarSlot>
        <BarSlot $w={23}>
          <Glyph w={16} h={16}><circle cx={7} cy={7} r={6} stroke={D} /><path d="M1 7h12M7 1v12M9 9h6v6H9z" stroke={D} /></Glyph>
        </BarSlot>
        <BarSep $l={3} $r={1} />
        <BarSlot $w={24}>
          <Glyph w={18} h={18}><SPath x={1} y={1} s={.6} /><Refresh x={8} y={7} s={.6} /></Glyph>
        </BarSlot>
        <Caret $ml={4} />
        <BarSep $l={8} $r={1} />
        <BarSlot $w={24}>
          <Glyph w={17} h={14}><path d="M1 9l10-7 5 4-9 7zM1 9l3 4" stroke="#222" fill="#999" /><path d="M3 9l2 2M6 7l2 2M9 5l2 2" stroke="#fff" /></Glyph>
        </BarSlot>
        <BarSep $l={3} />
        <BarSlot $w={24}>
          <Glyph w={17} h={16}><path d="M1 1h10v9H1zM5 6h11v9H5z" stroke={D} fill="#fff" /><path d="M1 3h10M5 8h11" stroke={D} /></Glyph>
        </BarSlot>
        <BarSlot $w={24}>
          <Glyph w={16} h={16}><rect x={.5} y={.5} width={15} height={15} stroke="#222" /><rect x={1} y={1} width={14} height={2} fill="#333" /></Glyph>
        </BarSlot>
        <BarText>窗口</BarText>
        <Caret $ml={5} />
        <BarSlot $w={28}>
          <Glyph w={11} h={9}><path d="M0 .5h11M0 4.500h11M0 8.500h11" stroke="#333" /></Glyph>
        </BarSlot>
        <BarText $ml={-2}>菜单</BarText>
        <Caret $ml={5} />
        <BarSlot $w={19}>
          <Glyph w={7} h={8}><path d="M0 .5h7" stroke="#222" /><path d="M0 3h7L3.500 7z" fill="#222" /></Glyph>
        </BarSlot>
        <AppTitle>NX - 加工</AppTitle>
      </TitleBar>

      <TabBar>
        <FileTab>文件(F)</FileTab>
        <Tab $active>主页</Tab>
        {['几何体', '分析', '视图', '选择', '装配', '渲染', '工具', '应用模块'].map(t => <Tab key={t}>{t}</Tab>)}
      </TabBar>

      <Ribbon>
        <Group $w={218}>
          <GroupBody $pl={8}>
            <Tool $w={54}><ToolIcon><CreateToolIcon /></ToolIcon><ToolLabel $off>创建刀具</ToolLabel></Tool>
            <Tool $w={60}><ToolIcon><CreateGeomIcon /></ToolIcon><ToolLabel $off>创建几何体</ToolLabel></Tool>
            <Tool $w={60}><ToolIcon><CreateOpIcon /></ToolIcon><ToolLabel $off>创建工序</ToolLabel></Tool>
            <Tool $w={24}><ToolIcon><SmallCreateIcon /></ToolIcon><ToolLabel $off>对象</ToolLabel></Tool>
          </GroupBody>
        </Group>
        <Group $w={55}>
          <GroupBody>
            <Tool $w={54}><ToolIcon><PropsIcon /></ToolIcon><ToolLabel $off>属性</ToolLabel></Tool>
          </GroupBody>
        </Group>
        <Group $w={374}>
          <GroupBody $pl={6}>
            <Tool $w={66}><ToolIcon><EmptyIcon /></ToolIcon><ToolLabel $off>在制模型断面</ToolLabel></Tool>
            <Tool $w={52}><ToolIcon><GenerateIcon /></ToolIcon><ToolLabel>生成刀轨</ToolLabel></Tool>
            <Tool $w={54}><ToolIcon><BlockCheckIcon /></ToolIcon><ToolLabel $off>过切检查</ToolLabel></Tool>
            <Tool $w={52}><ToolIcon><ConfirmIcon /></ToolIcon><ToolLabel>确认刀轨</ToolLabel></Tool>
            <Tool $w={54}><ToolIcon><SimIcon /></ToolIcon><ToolLabel $off>机床仿真</ToolLabel></Tool>
            <Tool $w={40}><ToolIcon><PostIcon /></ToolIcon><ToolLabel $off>后处理</ToolLabel></Tool>
            <Tool $w={42} $ml={6}><ToolIcon><MoreToolIcon /></ToolIcon><ToolLabel>更多</ToolLabel><ToolCaret /></Tool>
          </GroupBody>
          <GroupFoot><GroupName>工序</GroupName><Caret /></GroupFoot>
        </Group>
        <Group $w={250}>
          <GroupBody $pl={10}>
            <Tool $w={51} $on><ToolIcon><ShowPathIcon /></ToolIcon><ToolLabel>显示刀轨</ToolLabel></Tool>
            <Tool $w={52}><ToolIcon><ReportIcon /></ToolIcon><ToolLabel>刀轨报告</ToolLabel></Tool>
            <StackCol $w={31} $ml={3} $gap={5}>
              <SelectedTile><HatchIcon /></SelectedTile>
              <BitIcon />
            </StackCol>
            <CaretSlot $w={14}><Caret /></CaretSlot>
            <StackCol $w={26} $ml={11} $gap={2}>
              <ArrowUpIcon />
              <LayersIcon />
              <ArrowUpIcon flip />
            </StackCol>
            <Tool $w={44} $ml={6}><ToolIcon><ColorsIcon /></ToolIcon><ToolLabel>更多</ToolLabel><ToolCaret /></Tool>
          </GroupBody>
          <GroupFoot><GroupName>显示</GroupName><Caret /></GroupFoot>
        </Group>
        <Group $w={256}>
          <GroupBody $pl={13}>
            <Transport>
              <RoundIcon><path d="M16.500 7v11l-8-5.500z" stroke="#333" /></RoundIcon><span />
              <RoundIcon><path d="M7.500 7v11M17 7v11l-8-5.500z" stroke="#333" /></RoundIcon><Caret />
            </Transport>
            <Transport $ml={8}>
              <RoundIcon><path d="M8 8h3v9H8zM14 8h3v9h-3z" stroke="#333" /></RoundIcon><span />
              <RoundIcon><path d="M8 7v11l8-5.500zM17 7v11" stroke="#333" /></RoundIcon><Caret />
            </Transport>
            <Tool $w={40} $ml={4}>
              <ToolIcon><RoundIcon r={16}><path d="M11.500 8v17l13-8.500z" stroke="#333" /></RoundIcon></ToolIcon>
              <ToolLabel>播放</ToolLabel>
            </Tool>
            <SpeedBox>
              <Track><Thumb /></Track>
              <SpeedLabel>速度</SpeedLabel>
            </SpeedBox>
          </GroupBody>
          <GroupFoot><GroupName>刀轨动画</GroupName><Caret /></GroupFoot>
        </Group>
        <Group $w={141}>
          <GroupBody $pl={11}>
            <Tool $w={48}><ToolIcon><IpwIcon /></ToolIcon><ToolLabel>显示 IPW</ToolLabel></Tool>
            <Tool $w={70} $ml={4}><ToolIcon><Ipw3dIcon /></ToolIcon><ToolLabel>显示 3D IPW</ToolLabel><ToolCaret /></Tool>
          </GroupBody>
          <GroupFoot><GroupName>IPW</GroupName><Caret /></GroupFoot>
        </Group>
        <Group $w={152}>
          <MiniRows>
            <MiniRow>
              <MiniIcon k="a" /><MiniIcon k="b" /><MiniIcon k="c" /><MiniIcon k="d" /><MiniSep /><MiniIcon k="e" />
            </MiniRow>
            <MiniRow>
              <MiniIcon k="f" /><MiniIcon k="g" /><MiniSep /><MiniIcon k="h" /><MiniIcon k="i" /><MiniIcon k="j" /><MiniIcon k="k" />
            </MiniRow>
          </MiniRows>
          <GroupFoot><GroupName>加工工具 - GC工具箱</GroupName><Caret /></GroupFoot>
        </Group>
      </Ribbon>

      <Tip>
        <TipTitle>创建刀具</TipTitle>
        <TipBody>新建刀具对象，该对象显示在工序导航器的机床视图中。</TipBody>
      </Tip>

      <Body>
        <Rail>
          <RailItem $h={24}><RailIcon k="gear" /></RailItem>
          <RailItem $mt={16}><RailIcon k="block" /></RailItem>
          <RailItem $mt={1}><RailIcon k="bracket" /></RailItem>
          <RailItem $h={46} $mt={-1} $on><RailIcon k="nav" /></RailItem>
          <RailItem $h={36}><RailIcon k="table" /></RailItem>
          <RailItem $mt={3}><RailIcon k="mach" /></RailItem>
          <RailItem $mt={1}><RailIcon k="nodes" /></RailItem>
          <RailItem $mt={11}><RailIcon k="web" /></RailItem>
          <RailItem $mt={11}><RailIcon k="clock" /></RailItem>
          <RailItem $mt={2}><RailIcon k="tools" /></RailItem>
          <RailItem><RailIcon k="open" /></RailItem>
        </Rail>

        <Panel>
          <PanelHead>
            <span>工序导航器 - 几何</span>
            <Glyph w={12} h={11}><rect x={.5} y={.5} width={11} height={10} stroke="#222" /><rect x={1} y={1} width={10} height={2} fill="#222" /></Glyph>
          </PanelHead>
          <TreeBox>
            <HeadRow>
              <HeadCell>名称</HeadCell>
              <HeadCell>刀轨</HeadCell>
              <HeadCell $pl={6}>刀具</HeadCell>
            </HeadRow>
            {rows.map((r, i) => <TreeRow key={i} r={r} alt={i % 2 === 1} />)}
            {blanks.map(i => (
              <Row key={i} $alt={(i + rows.length) % 2 === 1}>
                <NameCell $pl={0} />
                <Cell />
                <Cell $last />
              </Row>
            ))}
            <ScrollBar>
              <ScrollArrow><ScrollGlyph /></ScrollArrow>
              <ScrollThumb />
              <ScrollArrow $end><ScrollGlyph right /></ScrollArrow>
            </ScrollBar>
          </TreeBox>
          <Grip />
          <Section>相关性<Chevron /></Section>
          <Section>细节<Chevron /></Section>
        </Panel>

        <Stage>
          <DocBar>
            <DocTab $w={151} $on>
              <Glyph w={18} h={18}><SPath x={1} y={1} s={.6} c="#16353f" /><Refresh x={8} y={7} s={.6} c="#16353f" /></Glyph>
              <span>冲洗水接头1.prt</span>
              <TinyDoc c="#fff" />
              <Glyph w={11} h={11}><path d="M2 2l7 7M9 2L2 9" stroke="#b7dbe6" strokeWidth="2" /></Glyph>
            </DocTab>
            <DocTab $w={160}>
              <Glyph w={18} h={18}><SPath x={1} y={1} s={.6} /><Refresh x={8} y={7} s={.6} /></Glyph>
              <span>STB-45-2-01 Z.prt</span>
              <TinyDoc />
            </DocTab>
          </DocBar>
          <Canvas>
            <svg width="982" height="844" viewBox="464 173 982 844" fill="none">
              <HalfPart />
              <HalfPart flip />
              <Toolpath />
              <Triad />
              <SideTriads />
              <Watermark />
            </svg>
            <AngleBox>
              <Dots />
              <AngleLabel>角度</AngleLabel>
              <AngleInput readOnly value="180.00000" />
            </AngleBox>
          </Canvas>
        </Stage>
      </Body>
    </Page>
  );
}
